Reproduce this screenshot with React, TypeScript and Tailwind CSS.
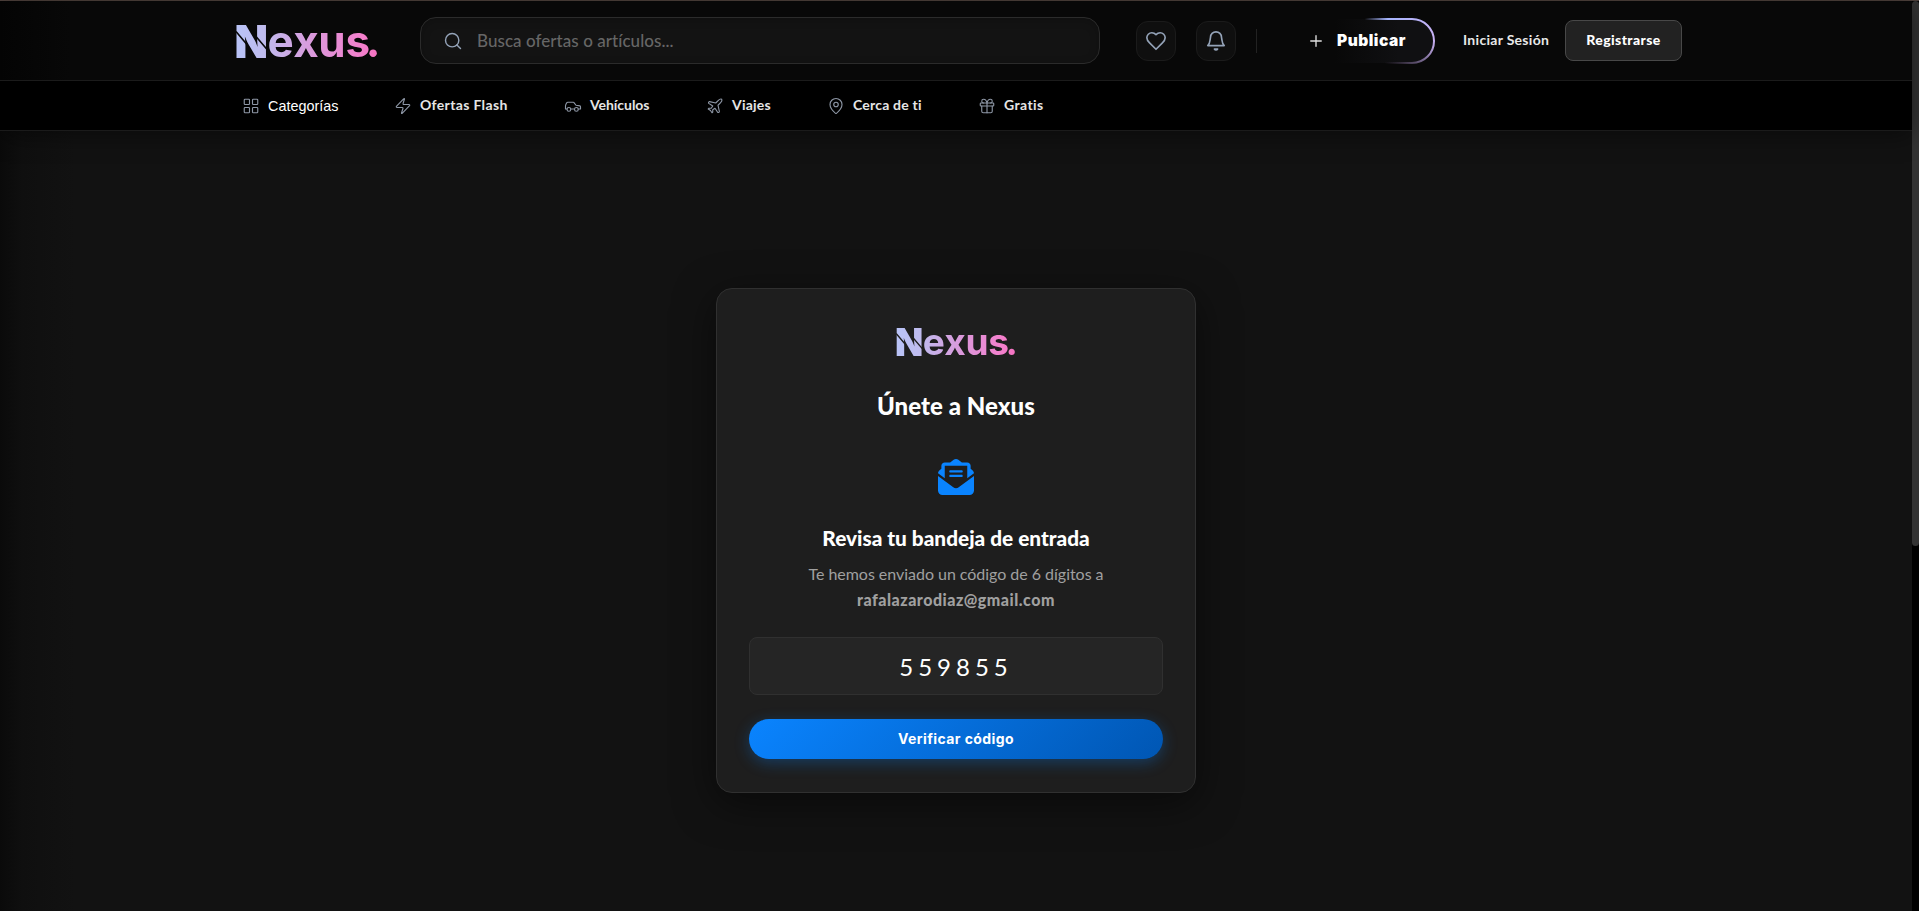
import React, { useState } from "react";
import { LayoutGrid, MapPin, Gift, Plane, Search, Zap, Plus } from "lucide-react";
import { FaEnvelopeOpenText } from "react-icons/fa6";

type OutlineProps = {
  children: React.ReactNode;
  className: string;
  width?: number;
};

const Outline = ({ children, className, width = 1.5 }: OutlineProps) => (
  <svg
    className={className}
    viewBox="0 0 24 24"
    fill="none"
    stroke="currentColor"
    strokeWidth={width}
    strokeLinecap="round"
    strokeLinejoin="round"
  >
    {children}
  </svg>
);

type LogoProps = {
  id: string;
  className: string;
};

const Logo = ({ id, className }: LogoProps) => (
  <svg className={className} viewBox="0 0 140 34" overflow="visible">
    <defs>
      <linearGradient id={`${id}-fill`} gradientUnits="userSpaceOnUse" x1="0" y1="0" x2="140" y2="0">
        <stop offset="0" stopColor="#b9c3f7" />
        <stop offset="0.2" stopColor="#bfbbee" />
        <stop offset="0.55" stopColor="#db98db" />
        <stop offset="0.9" stopColor="#f47fcc" />
        <stop offset="1" stopColor="#f472c0" />
      </linearGradient>
      <mask id={`${id}-cut`} maskUnits="userSpaceOnUse" x="-2" y="-10" width="146" height="54">
        <rect x="-2" y="-10" width="146" height="54" fill="#fff" />
        <path d="M-1 7.5L9.5 20M19 12.5L30.5 26" stroke="#000" strokeWidth="1.6" />
      </mask>
    </defs>
    <g
      fill={`url(#${id}-fill)`}
      mask={`url(#${id}-cut)`}
      fontFamily='Inter, "Liberation Sans", sans-serif'
      fontWeight="800"
    >
      <text x="-2.5" y="33.7" fontSize="45.5" fontWeight="900" textLength="33.5" lengthAdjust="spacingAndGlyphs">
        N
      </text>
      <text x="30.5 56.2 81.2 108.4 128.8" y="32.6" fontSize="44" fontWeight="700">
        exus.
      </text>
    </g>
  </svg>
);

const App = () => {
  const [code, setCode] = useState("559855");
  const [links] = useState<any>([
    {
      name: "Categorías",
      icon: <LayoutGrid size={18} strokeWidth={1.5} />,
      box: "w-[152px]",
      text: 'font-["Liberation_Sans",sans-serif] text-[14.4px] text-white pt-px',
    },
    {
      name: "Ofertas Flash",
      icon: <Zap size={18} strokeWidth={1.5} />,
      box: "w-[170px]",
      text: "font-bold pb-px tracking-[0.35px]",
    },
    {
      name: "Vehículos",
      icon: (
        <Outline className="w-[18px] h-[18px]">
          <path d="M14 16H9m10 0h3v-3.15a1 1 0 0 0-.84-.99L16 11l-2.7-3.6a1 1 0 0 0-.8-.4H5.24a2 2 0 0 0-1.8 1.1l-.8 1.63A6 6 0 0 0 2 12.42V16h2" />
          <circle cx="6.5" cy="16.5" r="2.5" />
          <circle cx="16.5" cy="16.5" r="2.5" />
        </Outline>
      ),
      box: "w-[142px]",
      text: "font-bold pb-px tracking-[-0.05px]",
    },
    {
      name: "Viajes",
      icon: <Plane size={18} strokeWidth={1.5} />,
      box: "w-[121px]",
      text: "font-bold pb-px tracking-[0.2px]",
    },
    {
      name: "Cerca de ti",
      icon: <MapPin size={18} strokeWidth={1.5} />,
      box: "w-[151px]",
      text: "font-bold pb-px tracking-[0.2px]",
    },
    {
      name: "Gratis",
      icon: <Gift size={18} strokeWidth={1.5} />,
      box: "w-[80px]",
      text: "font-bold pb-px tracking-[0.4px]",
    },
  ]);

  return (
    <div className="w-full h-screen overflow-hidden flex flex-col bg-black font-[Lato,sans-serif] text-white">
      <div className="h-px shrink-0 bg-[#51433e]"></div>
      <div className="flex-1 min-h-0 flex">
        <div className="flex-1 min-w-0 flex flex-col bg-[#121212]">
          <header className="relative z-10 shrink-0 shadow-[0_4px_24px_rgba(0,0,0,0.45)]">
            <div className="h-20 flex items-center border-b border-[#1b1b1b] bg-[linear-gradient(90deg,#040404_0,#080808_70px)] pl-[237px]">
              <Logo id="head" className="w-[140px] h-[34px] shrink-0" />
              <div className="ml-[43px] w-[680px] h-[47px] shrink-0 flex items-center gap-3.5 rounded-2xl border border-[#2b2b2b] bg-[#131313] pl-[22px] shadow-[inset_0_2px_10px_rgba(0,0,0,0.2)]">
                <Search size={20} strokeWidth={1.7} className="text-[#94a3b8]" />
                <input
                  className="w-[500px] bg-transparent outline-none text-[17px] font-medium tracking-[0.05px] placeholder:text-[#666]"
                  placeholder="Busca ofertas o artículos..."
                />
              </div>
              <button className="ml-9 size-10 shrink-0 flex justify-center items-center rounded-xl border border-[#1b1b1b] bg-[#0f0f0f] text-[#94a3b8]">
                <Outline className="size-[22px]" width={1.8}>
                  <path d="M19 14c1.49-1.46 3-3.21 3-5.5A5.5 5.5 0 0 0 16.5 3c-1.76 0-3 .5-4.5 2-1.5-1.5-2.74-2-4.5-2A5.5 5.5 0 0 0 2 8.5c0 2.3 1.5 4.05 3 5.5l7 7Z" />
                </Outline>
              </button>
              <button className="ml-5 size-10 shrink-0 flex justify-center items-center rounded-xl border border-[#1b1b1b] bg-[#0f0f0f] text-[#94a3b8]">
                <Outline className="size-[22px]" width={1.8}>
                  <path d="M3 17h18c-1.5-1.3-2.2-3-2.4-5.500L18 8a6 6 0 0 0-12 0l-.6 3.500C5.200 14 4.500 15.700 3 17Z" />
                  <path d="M10.300 20.800a1.940 1.940 0 0 0 3.400 0Z" />
                </Outline>
              </button>
              <div className="ml-5 w-px h-6 bg-[#222]"></div>
              <button className="relative ml-[34px] w-[144px] h-[46px] shrink-0 flex items-center rounded-full pl-4">
                <svg className="absolute inset-0" width="144" height="46" viewBox="0 0 144 46" fill="none">
                  <defs>
                    <linearGradient id="top" gradientUnits="userSpaceOnUse" x1="74" y1="0" x2="144" y2="23">
                      <stop offset="0" stopColor="#a5b4fc" stopOpacity="0" />
                      <stop offset="0.3" stopColor="#a5b4fc" />
                      <stop offset="1" stopColor="#c9b2f5" />
                    </linearGradient>
                    <linearGradient id="bottom" gradientUnits="userSpaceOnUse" x1="144" y1="23" x2="94" y2="46">
                      <stop offset="0" stopColor="#c9b2f5" />
                      <stop offset="1" stopColor="#7c628e" stopOpacity="0" />
                    </linearGradient>
                    <linearGradient id="inner" x1="0" y1="0" x2="1" y2="0">
                      <stop offset="0.3" stopColor="#101012" stopOpacity="0" />
                      <stop offset="0.75" stopColor="#101012" />
                    </linearGradient>
                  </defs>
                  <rect x="1" y="1" width="142" height="44" rx="22" fill="url(#inner)" />
                  <path d="M74 1H121A22 22 0 0 1 143 23" stroke="url(#top)" strokeWidth="2" />
                  <path d="M143 23A22 22 0 0 1 121 45H90" stroke="url(#bottom)" strokeWidth="2" />
                </svg>
                <Plus size={18} strokeWidth={1.8} className="relative shrink-0 text-[#e0e0e0]" />
                <span className="relative ml-3 pt-px font-[Inter,sans-serif] font-black text-[15.5px] tracking-[0.5px]">
                  Publicar
                </span>
              </button>
              <a className="ml-7 w-[88px] shrink-0 whitespace-nowrap pb-0.5 text-sm font-bold tracking-[0.3px] text-[#e8e8e8]">
                Iniciar Sesión
              </a>
              <button className="ml-[14px] w-[117px] h-[41px] shrink-0 rounded-lg border border-[#484848] bg-[#222] pb-0.5 text-sm font-black tracking-[0.4px]">
                Registrarse
              </button>
            </div>
            <nav className="h-[50px] flex items-center border-b border-[#1b1b1b] bg-black pl-[242px]">
              {links.map((dt: any, index: any) => (
                <a className={`flex items-center gap-2 ${dt.box}`} key={index}>
                  <span className="text-[#8e97a6]">{dt.icon}</span>
                  <span className={`text-sm leading-4 whitespace-nowrap text-[#e5e5e5] ${dt.text}`}>{dt.name}</span>
                </a>
              ))}
            </nav>
          </header>
          <main className="flex-1 min-h-0 flex justify-center items-start pt-[157px] bg-[linear-gradient(90deg,#0a0a0a_0,#0f0f0f_22px,#121212_75px)]">
            <div className="w-[480px] h-[505px] rounded-2xl border border-[#303030] bg-[#1e1e1e] px-8 flex flex-col items-center shadow-[0_10px_40px_rgba(0,0,0,0.5)]">
              <Logo id="card" className="mt-[38px] w-[118px] h-[29px] shrink-0" />
              <h1 className="mt-8 text-2xl leading-9 font-black tracking-[0.05px]">Únete a Nexus</h1>
              <FaEnvelopeOpenText size={36} className="mt-[35px] shrink-0 text-[#0a84ff]" />
              <h2 className="mt-[27px] text-[20.8px] leading-8 font-black">Revisa tu bandeja de entrada</h2>
              <p className="mt-[7px] text-center text-base leading-[25.6px] tracking-[-0.03px] text-[#a0a0a0]">
                Te hemos enviado un código de 6 dígitos a
                <br />
                <b className="font-black tracking-[0.5px]">rafalazarodiaz@gmail.com</b>
              </p>
              <input
                className="mt-[25px] w-full h-[58px] shrink-0 rounded-lg border border-[#303030] bg-[#252525] text-center text-2xl tracking-[5px] outline-none"
                value={code}
                onChange={(e) => setCode(e.target.value)}
              />
              <button className="mt-6 w-full h-10 shrink-0 rounded-full bg-[linear-gradient(135deg,#0a84ff,#0056b3)] font-[Inter,sans-serif] text-sm font-bold tracking-[0.4px] shadow-[0_4px_15px_rgba(10,132,255,0.3)]">
                Verificar código
              </button>
            </div>
          </main>
        </div>
        <div className="w-[7px] shrink-0 bg-black">
          <div className="h-[545px] rounded bg-[#333]"></div>
        </div>
      </div>
    </div>
  );
};

export default App;
